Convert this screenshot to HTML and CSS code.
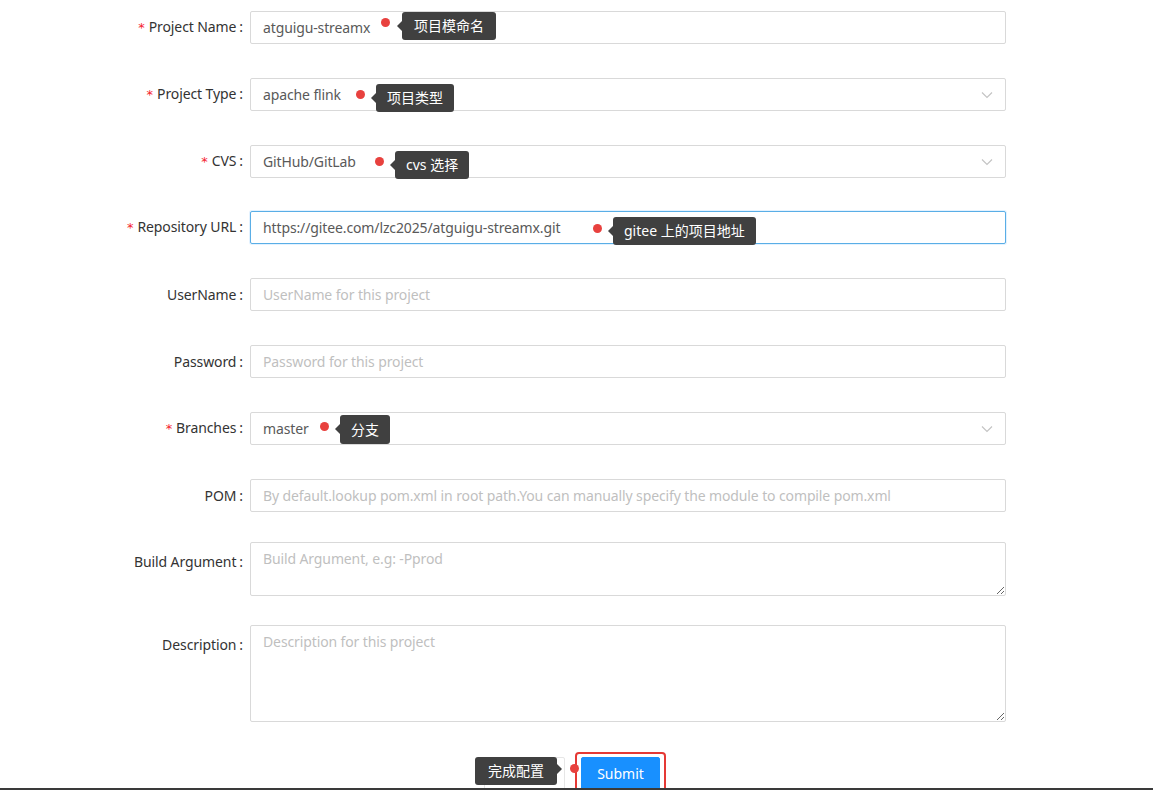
FILE: index.html
```html
<!DOCTYPE html>
<html lang="zh">
<head>
<meta charset="utf-8">
<title>Project</title>
<link rel="stylesheet" href="styles.css">
</head>
<body>
<form class="form">
  <div class="row">
    <label class="label"><span class="req">*</span>Project Name<span class="colon">:</span></label>
    <div class="control">
      <input class="input" type="text" value="atguigu-streamx" readonly>
      <span class="dot dot-name"></span>
      <span class="tip tip-left tip-name">项目模命名</span>
    </div>
  </div>
  <div class="row">
    <label class="label"><span class="req">*</span>Project Type<span class="colon">:</span></label>
    <div class="control">
      <div class="select"><span class="value">apache flink</span><svg class="chev" width="12" height="8" viewBox="0 0 12 8"><path d="M1 1.5 L6 6.5 L11 1.5" fill="none" stroke="#c4c4c4" stroke-width="1.2"/></svg></div>
      <span class="dot dot-type"></span>
      <span class="tip tip-left tip-type">项目类型</span>
    </div>
  </div>
  <div class="row row-cvs">
    <label class="label"><span class="req">*</span>CVS<span class="colon">:</span></label>
    <div class="control">
      <div class="select"><span class="value">GitHub/GitLab</span><svg class="chev" width="12" height="8" viewBox="0 0 12 8"><path d="M1 1.5 L6 6.5 L11 1.5" fill="none" stroke="#c4c4c4" stroke-width="1.2"/></svg></div>
      <span class="dot dot-cvs"></span>
      <span class="tip tip-left tip-cvs">cvs 选择</span>
    </div>
  </div>
  <div class="row">
    <label class="label"><span class="req">*</span>Repository URL<span class="colon">:</span></label>
    <div class="control">
      <input class="input focused" type="text" value="https://gitee.com/lzc2025/atguigu-streamx.git" readonly>
      <span class="dot dot-url"></span>
      <span class="tip tip-left tip-url">gitee 上的项目地址</span>
    </div>
  </div>
  <div class="row">
    <label class="label">UserName<span class="colon">:</span></label>
    <div class="control">
      <input class="input" type="text" placeholder="UserName for this project">
    </div>
  </div>
  <div class="row">
    <label class="label">Password<span class="colon">:</span></label>
    <div class="control">
      <input class="input" type="text" placeholder="Password for this project">
    </div>
  </div>
  <div class="row">
    <label class="label"><span class="req">*</span>Branches<span class="colon">:</span></label>
    <div class="control">
      <div class="select"><span class="value">master</span><svg class="chev" width="12" height="8" viewBox="0 0 12 8"><path d="M1 1.5 L6 6.5 L11 1.5" fill="none" stroke="#c4c4c4" stroke-width="1.2"/></svg></div>
      <span class="dot dot-branch"></span>
      <span class="tip tip-left tip-branch">分支</span>
    </div>
  </div>
  <div class="row row-pom">
    <label class="label">POM<span class="colon">:</span></label>
    <div class="control">
      <input class="input" type="text" placeholder="By default.lookup pom.xml in root path.You can manually specify the module to compile pom.xml">
    </div>
  </div>
  <div class="row row-area row-build">
    <label class="label">Build Argument<span class="colon">:</span></label>
    <div class="control">
      <textarea class="textarea ta-build" placeholder="Build Argument, e.g: -Pprod"></textarea>
    </div>
  </div>
  <div class="row row-area row-desc">
    <label class="label">Description<span class="colon">:</span></label>
    <div class="control">
      <textarea class="textarea ta-desc" placeholder="Description for this project"></textarea>
    </div>
  </div>
  <div class="actions">
    <div class="btn-wrap">
      <button type="button" class="btn btn-ghost" aria-label="Cancel"></button>
      <span class="tip tip-right tip-submit">完成配置</span>
    </div>
    <div class="submit-wrap">
      <span class="dot dot-submit"></span>
      <button type="button" class="btn btn-primary">Submit</button>
    </div>
  </div>
</form>
<div class="bottom-bar"></div>
</body>
</html>
```
FILE: styles.css
```css
html, body {
  margin: 0;
  padding: 0;
  background: #fff;
  height: 790px;
  overflow: hidden;
}
body {
  font-family: "Noto Sans", "Noto Sans CJK SC", sans-serif;
  font-size: 14px;
  color: rgba(0, 0, 0, 0.85);
}
.form {
  padding-top: 11px;
}
.row {
  display: flex;
  align-items: center;
  margin-bottom: 34px;
}
.row-cvs { margin-bottom: 33px; }
.row-pom { margin-bottom: 30px; }
.row-area { align-items: flex-start; margin-bottom: 29px; }
.row-desc { margin-bottom: 35px; }
.label {
  width: 250px;
  flex: none;
  box-sizing: border-box;
  text-align: right;
  color: #333;
  white-space: nowrap;
  line-height: 20px;
  letter-spacing: -0.1px;
}
.row-area .label { line-height: 40px; }
.req {
  color: #f5222d;
  margin-right: 4px;
  font-family: "DejaVu Sans", sans-serif;
  font-size: 13px;
}
.colon {
  margin: 0 7px 0 3px;
}
.control {
  width: 756px;
  position: relative;
}
.input, .select, .textarea {
  box-sizing: border-box;
  width: 100%;
  border: 1px solid #d9d9d9;
  border-radius: 2px;
  background: #fff;
  font: inherit;
  font-size: 14px;
  letter-spacing: -0.12px;
  color: #595959;
  padding: 0 12px;
  outline: none;
}
.input, .select {
  height: 33px;
  line-height: 31px;
}
.select {
  display: flex;
  align-items: center;
  justify-content: space-between;
}
.input::placeholder, .textarea::placeholder {
  color: #bfbfbf;
}
.focused {
  border-color: #5aaee6;
  box-shadow: 0 0 0 1px rgba(24, 144, 255, 0.12);
}
.textarea {
  display: block;
  resize: vertical;
  padding: 5px 12px;
  line-height: 22px;
}
.ta-build { height: 54px; }
.ta-desc { height: 97px; }

.dot {
  position: absolute;
  width: 9px;
  height: 9px;
  border-radius: 50%;
  background: #e8413e;
}
.tip {
  position: absolute;
  background: #404040;
  color: #fff;
  border-radius: 3px;
  height: 28px;
  line-height: 28px;
  padding: 0 11px;
  font-family: "Noto Sans", "Noto Sans CJK SC", sans-serif;
  font-size: 14px;
  white-space: nowrap;
}
.tip-left::before {
  content: "";
  position: absolute;
  left: -5px;
  top: 9px;
  border-top: 5px solid transparent;
  border-bottom: 5px solid transparent;
  border-right: 5px solid #404040;
}
.tip-right::after {
  content: "";
  position: absolute;
  right: -5px;
  top: 7px;
  border-top: 5px solid transparent;
  border-bottom: 5px solid transparent;
  border-left: 5px solid #404040;
}
.dot-name { left: 131px; top: 7px; }
.tip-name { left: 152px; top: 1px; padding: 0 12px; }
.dot-type { left: 106px; top: 12px; }
.tip-type { left: 126px; top: 6px; }
.dot-cvs { left: 125px; top: 12px; }
.tip-cvs { left: 145px; top: 6px; }
.dot-url { left: 343px; top: 13px; }
.tip-url { left: 363px; top: 6px; }
.dot-branch { left: 70px; top: 10px; }
.tip-branch { left: 90px; top: 3px; height: 29px; line-height: 29px; }

.actions {
  display: flex;
  gap: 16px;
  padding-left: 484px;
}
.btn-wrap, .submit-wrap {
  position: relative;
}
.btn {
  display: block;
  height: 33px;
  border-radius: 2px;
  font-family: "Noto Sans", sans-serif;
  font-size: 14px;
  padding: 0;
  box-sizing: border-box;
}
.btn-ghost {
  width: 81px;
  border: 1px solid #e6e6e6;
  background: #fff;
}
.btn-primary {
  width: 79px;
  border: 1px solid #1890ff;
  background: #1890ff;
  color: #fff;
}
.submit-wrap::after {
  content: "";
  position: absolute;
  left: -6px;
  top: -5px;
  right: -6px;
  bottom: -6px;
  border: 2px solid #e53935;
  border-radius: 4px;
}
.dot-submit { left: -11px; top: 7px; z-index: 2; }
.tip-submit { left: -9px; top: 0; width: 60px; text-align: center; }
.bottom-bar {
  position: fixed;
  left: 0;
  right: 0;
  bottom: 0;
  height: 2px;
  background: #3a3a3a;
  z-index: 5;
}
```
